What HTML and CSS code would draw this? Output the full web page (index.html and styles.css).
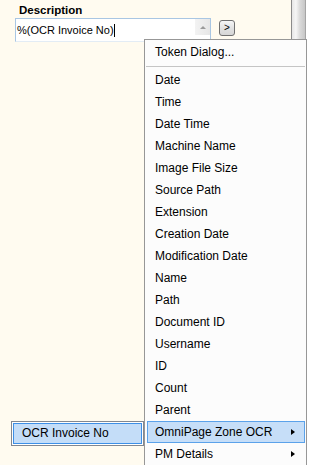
FILE: index.html
```html
<!DOCTYPE html>
<html>
<head>
<meta charset="utf-8">
<link rel="stylesheet" href="styles.css">
</head>
<body>
<div class="window">
  <div class="panel">
    <div class="label">Description</div>
    <div class="field-row">
      <div class="textbox">
        <div class="tb-text">%(OCR Invoice No)<span class="caret"></span></div>
        <div class="tb-scroll"><span class="up-tri"></span></div>
      </div>
      <div class="btn">&gt;</div>
    </div>
    <div class="list">
      <div class="list-item">OCR Invoice No</div>
    </div>
  </div>
  <div class="vscroll"></div>
  <div class="edge"></div>

  <div class="menu">
    <div class="item">Token Dialog...</div>
    <div class="sep"></div>
    <div class="item">Date</div>
    <div class="item">Time</div>
    <div class="item">Date Time</div>
    <div class="item">Machine Name</div>
    <div class="item">Image File Size</div>
    <div class="item">Source Path</div>
    <div class="item">Extension</div>
    <div class="item">Creation Date</div>
    <div class="item">Modification Date</div>
    <div class="item">Name</div>
    <div class="item">Path</div>
    <div class="item">Document ID</div>
    <div class="item">Username</div>
    <div class="item">ID</div>
    <div class="item">Count</div>
    <div class="item">Parent</div>
    <div class="item active">OmniPage Zone OCR<span class="sub"></span></div>
    <div class="item">PM Details<span class="sub"></span></div>
  </div>
</div>
</body>
</html>
```
FILE: styles.css
```css
* { box-sizing: border-box; }
html, body {
  margin: 0;
  padding: 0;
  background: #ffffff;
}
body {
  width: 312px;
  height: 465px;
  overflow: hidden;
  font-family: "Liberation Sans", Arial, sans-serif;
  color: #000;
}
.window {
  position: relative;
  display: flex;
  height: 465px;
}
.panel {
  width: 291px;
  background: #fffbf0;
  display: flex;
  flex-direction: column;
  padding-top: 3px;
}
.label {
  margin-left: 19px;
  font-weight: bold;
  font-size: 11.5px;
  line-height: 14px;
}
.field-row {
  display: flex;
  align-items: flex-start;
  margin-top: 1px;
  padding-left: 15px;
}
.textbox {
  width: 196px;
  height: 24px;
  display: flex;
  background: #ffffff;
  border: 1px solid #a9c6e3;
  border-bottom-color: #e3ecf5;
}
.tb-text {
  flex: 1;
  font-size: 11px;
  line-height: 20px;
  padding-left: 1px;
  white-space: nowrap;
  display: flex;
  align-items: center;
}
.caret {
  display: inline-block;
  width: 1px;
  height: 13px;
  background: #000;
  margin-left: 0;
}
.tb-scroll {
  width: 15px;
  height: 16px;
  background: linear-gradient(to right, #f3f3f3, #e6e6e6);
  display: flex;
  align-items: center;
  justify-content: center;
}
.up-tri {
  width: 0;
  height: 0;
  border-left: 3px solid transparent;
  border-right: 3px solid transparent;
  border-bottom: 3px solid #9a9a9a;
}
.btn {
  margin-left: 8px;
  margin-top: 2px;
  width: 16px;
  height: 16px;
  border: 1px solid #707070;
  border-radius: 3px;
  background: linear-gradient(#f6f6f6, #e2e2e2 50%, #d6d6d6);
  font-size: 10px;
  line-height: 14px;
  text-align: center;
}
.list {
  margin-top: auto;
  margin-bottom: 19px;
  margin-left: 11px;
  width: 133px;
  height: 25px;
  border: 1px solid #828790;
  padding: 1px;
  background: #ffffff;
}
.list-item {
  height: 21px;
  border: 1px solid #3d8fe6;
  background: #c4ddf8;
  font-size: 12px;
  line-height: 19px;
  padding-left: 8px;
}
.vscroll {
  width: 15px;
  border-left: 1px solid #8b8b8b;
  border-right: 1px solid #a5a5a5;
  background: linear-gradient(to right, #e6e6e6, #f6f6f6 30%, #dadada 60%, #c6c6c6);
}
.edge {
  flex: 1;
  background: #ffffff;
}
.menu {
  position: absolute;
  left: 144px;
  top: 39px;
  width: 163px;
  height: 440px;
  border: 1px solid #979797;
  background: #fcfcfc;
  padding: 1px 1px 0 2px;
}
.item {
  height: 22px;
  display: flex;
  align-items: center;
  padding-left: 7px;
  padding-right: 9px;
  border: 1px solid transparent;
  font-size: 12px;
  white-space: nowrap;
}
.item.active {
  background: #c6def8;
  border-color: #5ba2ea;
}
.sep {
  height: 1px;
  margin: 3px 0 2px -1px;
  background: #c5c5c5;
}
.sub {
  margin-left: auto;
  width: 0;
  height: 0;
  border-left: 4px solid #000;
  border-top: 3.5px solid transparent;
  border-bottom: 3.5px solid transparent;
}
```
